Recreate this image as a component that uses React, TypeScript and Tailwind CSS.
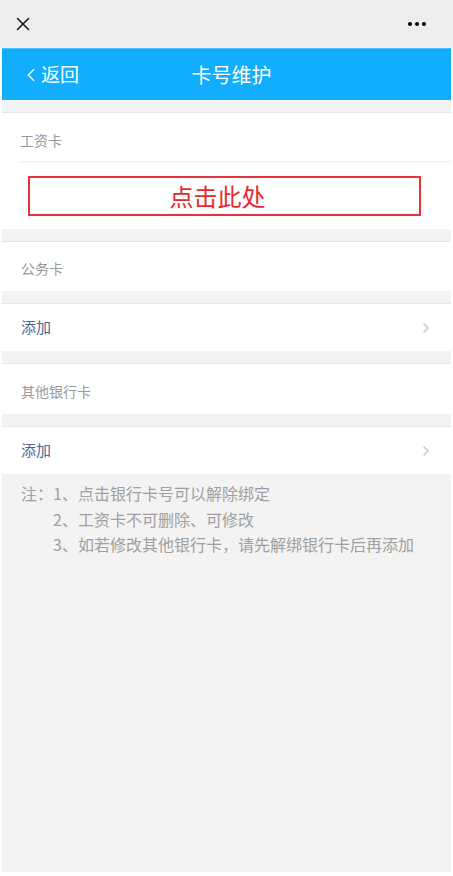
import { ChevronLeft, ChevronRight, X } from "lucide-react";

const font = { fontFamily: '"Noto Sans CJK SC", "Noto Sans", sans-serif' };

function Gap() {
  return <div className="h-[13px] border-b border-[#e6e6e6]" />;
}

function AddRow() {
  return (
    <div className="h-[47px] bg-white flex items-center justify-between pl-[19px] pr-[17px]">
      <span className="text-[15px] text-[#4c6592]">添加</span>
      <ChevronRight className="w-[16px] h-[16px] text-[#c4c4c4]" strokeWidth={2} />
    </div>
  );
}

export default function App() {
  return (
    <div className="w-[453px] h-[876px] bg-white overflow-hidden" style={font}>
      {/* WeChat top bar */}
      <div className="h-[48px] bg-[#ededed] flex items-center justify-between pl-[12px] pr-[27px]">
        <X className="w-[22px] h-[22px] text-[#111]" strokeWidth={1.6} />
        <div className="flex gap-[3px]">
          <span className="w-[4px] h-[4px] rounded-full bg-black" />
          <span className="w-[4px] h-[4px] rounded-full bg-black" />
          <span className="w-[4px] h-[4px] rounded-full bg-black" />
        </div>
      </div>

      <div className="mx-[2px] h-[824px] bg-[#f3f3f3] flex flex-col">
        {/* Blue header */}
        <div className="h-[52px] bg-[#12adfc] border-t border-[#4cc3fb] flex items-center relative">
          <div className="flex items-center pl-[18px] text-white">
            <ChevronLeft className="w-[22px] h-[22px] -mr-[1px]" strokeWidth={1.5} />
            <span className="text-[19px]">返回</span>
          </div>
          <div className="absolute inset-0 flex items-center justify-center pl-[10px] text-white text-[20px]">
            卡号维护
          </div>
        </div>

        <Gap />

        {/* 工资卡 */}
        <div className="bg-white h-[116px] flex flex-col">
          <div className="ml-[18px] h-[50px] pt-[6px] flex items-center border-b-2 border-[#f4f4f4] text-[14px] text-[#999]">
            工资卡
          </div>
          <div className="flex-1 flex items-center pl-[26px] pr-[30px]">
            <div className="w-full h-[40px] border-2 border-[#e6303a] flex items-center justify-center pr-[14px] text-[24px] text-[#e8282f]">
              点击此处
            </div>
          </div>
        </div>

        <Gap />

        <div className="h-[49px] bg-white flex items-center pl-[19px] pt-[3px] text-[14px] text-[#999]">公务卡</div>

        <Gap />

        <AddRow />

        <Gap />

        <div className="h-[50px] bg-white flex items-center pl-[19px] pt-[5px] text-[14px] text-[#999]">其他银行卡</div>

        <Gap />

        <AddRow />

        {/* Notes */}
        <div className="pl-[19px] pt-[7px] text-[16px] leading-[25.5px] text-[#a0a0a0]">
          <div>注：1、点击银行卡号可以解除绑定</div>
          <div className="pl-[32px]">2、工资卡不可删除、可修改</div>
          <div className="pl-[32px]">3、如若修改其他银行卡，请先解绑银行卡后再添加</div>
        </div>
      </div>
    </div>
  );
}
